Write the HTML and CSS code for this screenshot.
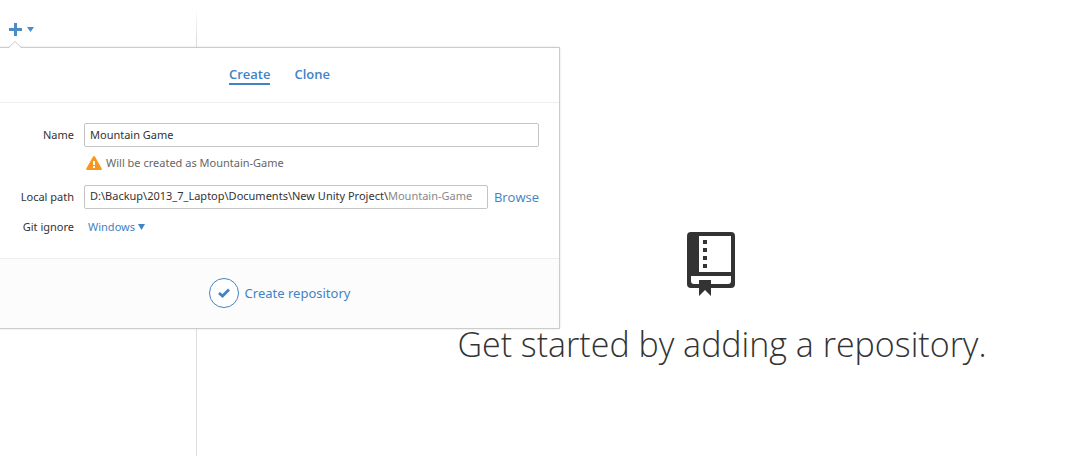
FILE: index.html
```html
<!DOCTYPE html>
<html lang="en">
<head>
<meta charset="utf-8">
<title>Add a repository</title>
<link rel="stylesheet" href="styles.css">
</head>
<body>
<div class="app">
  <aside class="sidebar">
    <button class="add-button" type="button" aria-label="Add a repository" aria-expanded="true">
      <svg width="13" height="13" viewBox="0 0 13 13" aria-hidden="true"><path d="M5 0h3v5h5v3H8v5H5V8H0V5h5z" fill="currentColor"/></svg>
      <svg width="7" height="5" viewBox="0 0 7 5" aria-hidden="true"><path d="M0 0h7L3.5 5z" fill="currentColor"/></svg>
    </button>
  </aside>
  <main class="welcome">
    <svg class="repo-icon" width="48" height="64" viewBox="0 0 48 64" aria-hidden="true">
      <path fill="#333" fill-rule="evenodd" d="M4 0H44Q48 0 48 4V52Q48 56 44 56H24V64L18 58L12 64V56H4Q0 56 0 52V4Q0 0 4 0zM12 4V40H44V4zM4 44V49Q4 52 7 52H12V48H24V52H41Q44 52 44 49V44z"/>
      <path fill="#333" d="M16 8h4v4h-4zM16 16h4v4h-4zM16 24h4v4h-4zM16 32h4v4h-4z"/>
    </svg>
    <h1 class="welcome-title">Get started by adding a repository.</h1>
  </main>
  <section class="popover">
    <svg class="popover-arrow" width="14" height="8" viewBox="0 0 14 8" aria-hidden="true"><path d="M0 8L7 1L14 8z" fill="#fff"/><path d="M0 7L7 .5L14 7" fill="none" stroke="#ccc"/></svg>
    <nav class="tabs">
      <button class="tab tab-active" type="button">Create</button>
      <button class="tab" type="button">Clone</button>
    </nav>
    <form class="create-form">
      <div class="fields">
        <label class="label" for="name">Name</label>
        <input class="field" id="name" type="text" value="Mountain Game">
        <p class="hint">
          <svg width="16" height="14" viewBox="0 0 16 14" aria-hidden="true"><path d="M8 0Q8.700 0 9.200 1L15.700 12.500Q16.200 14 15 14H1Q-.2 14 .3 12.500L6.800 1Q7.300 0 8 0z" fill="#f7981d"/><path d="M7 5h2v4H7zM7 10h2v2H7z" fill="#fff"/></svg>
          <span>Will be created as Mountain-Game</span>
        </p>
        <label class="label" for="path">Local path</label>
        <div class="path-row">
          <div class="field path-field">
            <input class="path-input" id="path" type="text" value="D:\Backup\2013_7_Laptop\Documents\New Unity Project\">
            <span class="path-suffix">Mountain-Game</span>
          </div>
          <button class="browse" type="button">Browse</button>
        </div>
        <label class="label" for="ignore">Git ignore</label>
        <div class="select-row">
          <select class="select" id="ignore"><option>Windows</option></select>
          <svg class="select-caret" width="7" height="6" viewBox="0 0 7 6" aria-hidden="true"><path d="M0 0h7L3.500 6z" fill="currentColor"/></svg>
        </div>
      </div>
      <footer class="form-footer">
        <button class="submit" type="submit">
          <svg width="30" height="30" viewBox="0 0 30 30" aria-hidden="true"><circle cx="15" cy="15" r="14.500" fill="#fff" stroke="currentColor"/><path d="M10 15L13.500 18L20 11.500" fill="none" stroke="currentColor" stroke-width="2.800"/></svg>
          <span>Create repository</span>
        </button>
      </footer>
    </form>
  </section>
</div>
</body>
</html>
```
FILE: styles.css
```css
* { box-sizing: border-box; }
body {
  margin: 0;
  background: #fff;
  color: #333;
  font: 11px/16px "Noto Sans", "Open Sans", sans-serif;
}
button, input, select {
  margin: 0;
  padding: 0;
  border: 0;
  background: none;
  color: inherit;
  font: inherit;
}
button, select { color: #4183c4; cursor: pointer; }
svg { display: block; flex: none; }
.app {
  position: relative;
  display: flex;
  min-height: 100vh;
}
.sidebar {
  width: 197px;
  flex: none;
  padding: 23px 9px;
  background: linear-gradient(to bottom, transparent 8px, #ddd 40px) right / 1px 100% no-repeat;
}
.add-button {
  display: flex;
  align-items: center;
  gap: 5px;
  color: #4b8bc8;
}
.welcome {
  flex: 1;
  display: flex;
  flex-direction: column;
  align-items: center;
  padding: 232px 0 0 168px;
}
.repo-icon { margin-right: 22px; }
.welcome-title {
  margin: 24px 0 0;
  font-family: "Open Sans", "Noto Sans", sans-serif;
  font-size: 34px;
  line-height: 48px;
  font-weight: 300;
  white-space: nowrap;
}
.popover {
  position: absolute;
  top: 48px;
  left: 0;
  width: 559px;
  background: #fff;
  box-shadow: 0 0 0 1px #ccc, 0 0 3px rgba(0, 0, 0, .25);
}
.popover-arrow {
  position: absolute;
  left: 8px;
  top: -7px;
}
.tabs {
  display: flex;
  justify-content: center;
  gap: 24px;
  height: 55px;
  padding-top: 17px;
  border-bottom: 1px solid #eee;
}
.tab {
  height: 20px;
  border-bottom: 2px solid transparent;
  font-family: "Open Sans", "Noto Sans", sans-serif;
  font-size: 13px;
  line-height: 18px;
  font-weight: 600;
}
.tab-active { border-color: #4183c4; }
.fields {
  display: grid;
  grid-template-columns: 74px 1fr;
  column-gap: 10px;
  align-items: center;
  padding: 20px 20px 19px 0;
}
.label { text-align: right; }
.field {
  height: 24px;
  min-width: 0;
  padding: 0 5px 2px;
  border: 1px solid #c4c4c4;
  border-radius: 2px;
  background: #fff;
}
.hint {
  grid-column: 2;
  display: flex;
  align-items: center;
  gap: 4px;
  margin: 8px 0 14px;
  padding-left: 2px;
  color: #666;
}
.path-row {
  display: flex;
  align-items: center;
  gap: 6px;
}
.path-field {
  flex: 1;
  display: flex;
  align-items: center;
}
.path-input {
  field-sizing: content;
  min-width: 0;
}
.path-suffix { color: #888; }
.browse {
  font-family: "Open Sans", "Noto Sans", sans-serif;
  font-size: 13px;
}
.select-row {
  display: flex;
  align-items: center;
  gap: 3px;
  padding: 10px 4px 4px;
  color: #4183c4;
}
.label[for="ignore"] { padding-top: 6px; }
.select { appearance: none; }
.form-footer {
  display: flex;
  justify-content: center;
  padding: 19px 0 20px;
  border-top: 1px solid #eee;
  background: #fcfcfc;
}
.submit {
  display: flex;
  align-items: center;
  gap: 6px;
  font-size: 13px;
}
```
